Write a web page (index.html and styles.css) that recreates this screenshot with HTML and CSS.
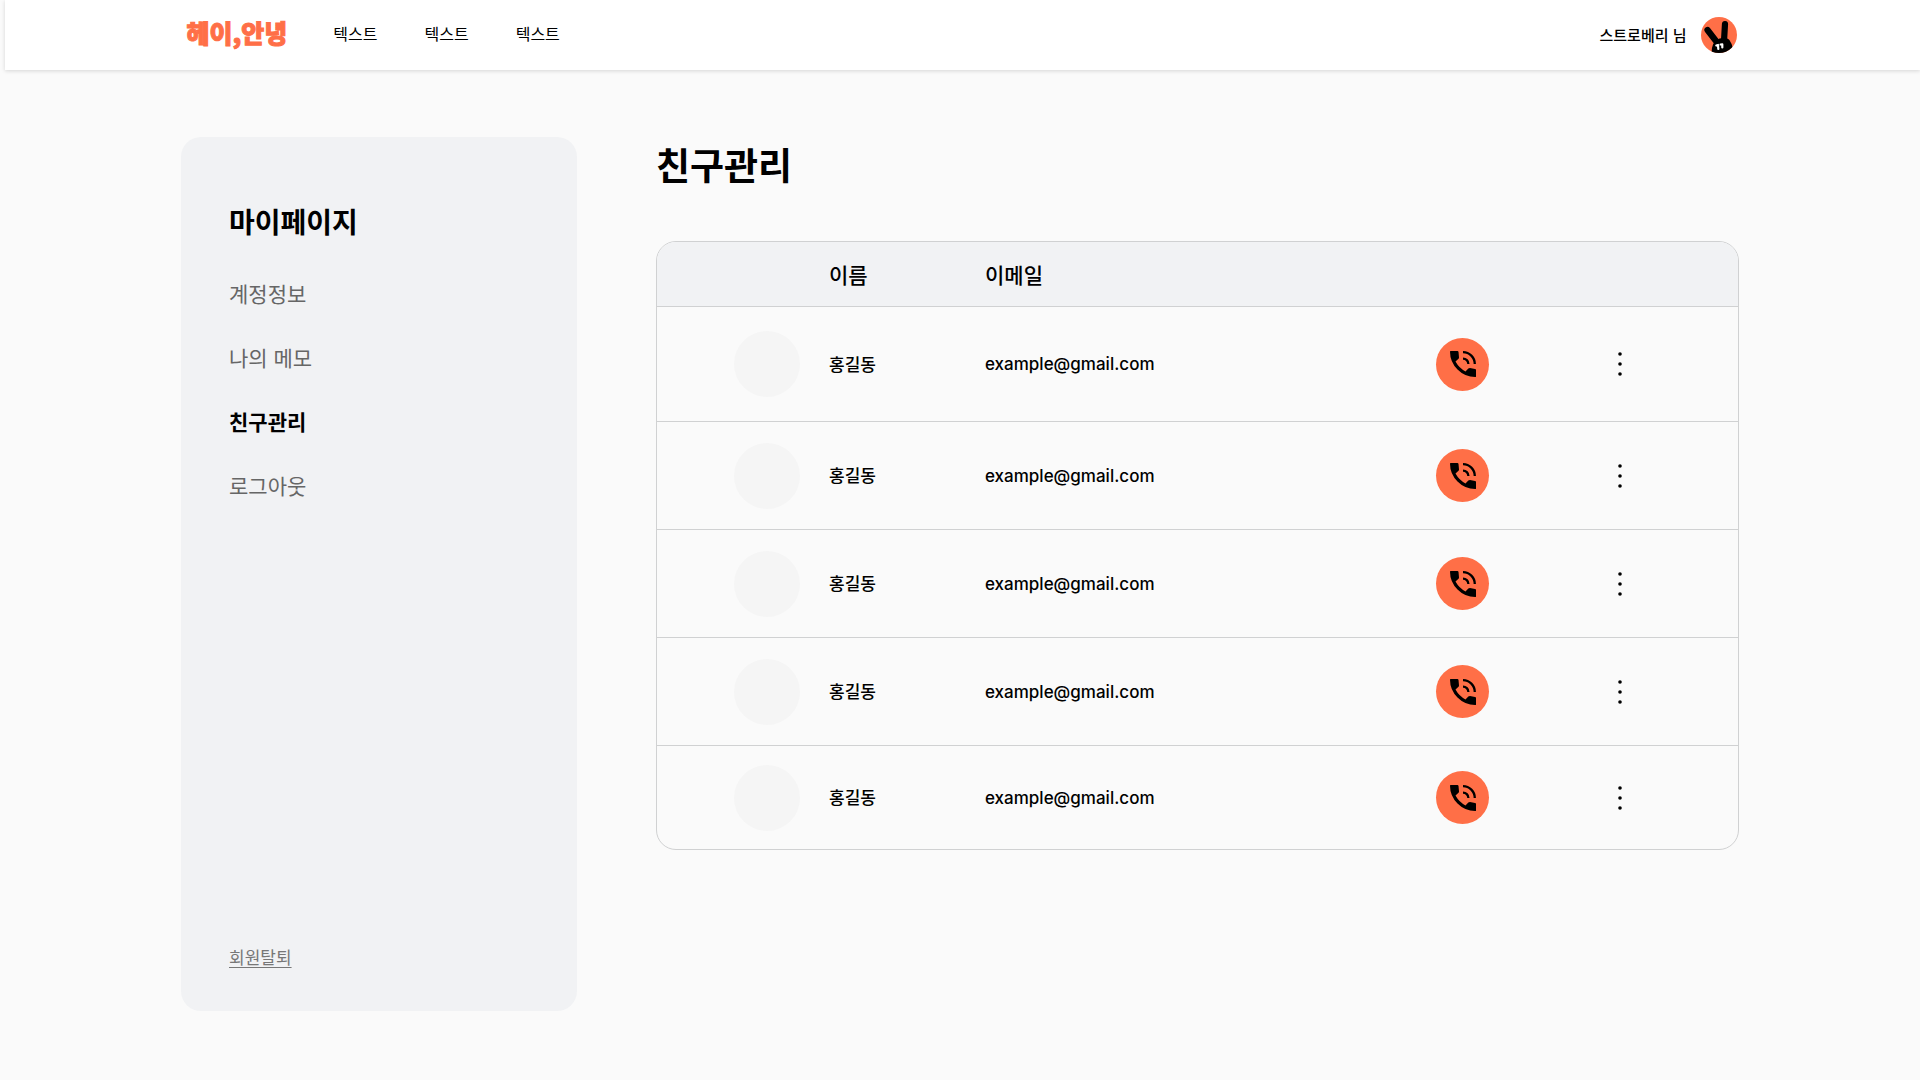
FILE: index.html
```html
<!DOCTYPE html>
<html lang="ko">
<head>
<meta charset="utf-8">
<meta name="viewport" content="width=device-width, initial-scale=1">
<title>친구관리</title>
<link rel="stylesheet" href="styles.css">
</head>
<body>
<svg class="sprite" aria-hidden="true">
  <symbol id="icon-call" viewBox="0 0 26 26">
    <path d="M.6 0H7.500Q8.300 0 8.500 1L9 6.500Q9 7.300 8.500 7.800L5.500 10.500Q9 17 15.500 20.400L18.300 17.500Q19 17 20 17L25 18Q26 18.200 26 19V25.400Q26 26 25.200 26Q15 26 7.500 18.500Q0 11 0 .8Q0 0 .6 0Z"/>
    <path d="M13 1.200A11.800 11.800 0 0 1 24.800 13M13 7.600A5.400 5.400 0 0 1 18.400 13" fill="none" stroke="#000" stroke-width="2.300"/>
  </symbol>
  <symbol id="icon-more" viewBox="0 0 4 24">
    <circle cx="2" cy="2" r="1.8"/><circle cx="2" cy="12" r="1.8"/><circle cx="2" cy="22" r="1.8"/>
  </symbol>
</svg>

<header class="topbar">
  <div class="topbar-inner">
    <a class="logo" href="#">헤이,안녕</a>
    <nav class="topnav" aria-label="주 메뉴">
      <a href="#">텍스트</a>
      <a href="#">텍스트</a>
      <a href="#">텍스트</a>
    </nav>
    <a class="user" href="#">
      <span>스트로베리 님</span>
      <svg class="user-avatar" viewBox="0 0 36 36" aria-hidden="true">
        <clipPath id="avatar-clip"><circle cx="18" cy="18" r="18"/></clipPath>
        <g clip-path="url(#avatar-clip)">
          <rect width="36" height="36" fill="#ff6f47"/>
          <path d="M6.500 13L15 24M24 7L23 24" stroke="#000" stroke-width="6.200" stroke-linecap="round"/>
          <path d="M10.500 36Q10.500 31 12 27.500Q14.500 21.500 22 21Q28 20.500 29.500 25Q31 27 31.500 30V36Z"/>
          <path d="M15.300 28.500L17 28L17.300 32M19.600 27.500L21.300 27.300L21.300 30.500" fill="none" stroke="#fff" stroke-width="2.200" stroke-linecap="round" stroke-linejoin="round"/>
        </g>
      </svg>
    </a>
  </div>
</header>

<div class="page">
  <aside class="sidebar">
    <h2>마이페이지</h2>
    <nav class="sidenav" aria-label="마이페이지">
      <a href="#">계정정보</a>
      <a href="#">나의 메모</a>
      <a href="#" aria-current="page">친구관리</a>
      <a href="#">로그아웃</a>
    </nav>
    <a class="withdraw" href="#">회원탈퇴</a>
  </aside>

  <main class="content">
    <h1>친구관리</h1>
    <table class="friends">
      <thead>
        <tr><th class="col-photo"></th><th class="col-name">이름</th><th class="col-email">이메일</th><th class="col-call"></th><th class="col-more"></th></tr>
      </thead>
      <tbody>
        <tr><td class="col-photo"><span class="photo"></span></td><td class="name">홍길동</td><td>example@gmail.com</td><td><button class="call" type="button" aria-label="전화"><svg><use href="#icon-call"/></svg></button></td><td><button class="more" type="button" aria-label="더보기"><svg><use href="#icon-more"/></svg></button></td></tr>
        <tr><td class="col-photo"><span class="photo"></span></td><td class="name">홍길동</td><td>example@gmail.com</td><td><button class="call" type="button" aria-label="전화"><svg><use href="#icon-call"/></svg></button></td><td><button class="more" type="button" aria-label="더보기"><svg><use href="#icon-more"/></svg></button></td></tr>
        <tr><td class="col-photo"><span class="photo"></span></td><td class="name">홍길동</td><td>example@gmail.com</td><td><button class="call" type="button" aria-label="전화"><svg><use href="#icon-call"/></svg></button></td><td><button class="more" type="button" aria-label="더보기"><svg><use href="#icon-more"/></svg></button></td></tr>
        <tr><td class="col-photo"><span class="photo"></span></td><td class="name">홍길동</td><td>example@gmail.com</td><td><button class="call" type="button" aria-label="전화"><svg><use href="#icon-call"/></svg></button></td><td><button class="more" type="button" aria-label="더보기"><svg><use href="#icon-more"/></svg></button></td></tr>
        <tr><td class="col-photo"><span class="photo"></span></td><td class="name">홍길동</td><td>example@gmail.com</td><td><button class="call" type="button" aria-label="전화"><svg><use href="#icon-call"/></svg></button></td><td><button class="more" type="button" aria-label="더보기"><svg><use href="#icon-more"/></svg></button></td></tr>
      </tbody>
    </table>
  </main>
</div>
</body>
</html>
```
FILE: styles.css
```css
* { box-sizing: border-box; }

body {
  margin: 0;
  background: #fafafa;
  color: #000;
  font-family: "Noto Sans CJK KR", sans-serif;
  font-size: 17px;
}

a { color: inherit; text-decoration: none; }
h1, h2 { margin: 0; font-weight: 700; }
.sprite { display: none; }

/* Top bar */
.topbar {
  margin-left: 5px;
  padding: 0 42px 0 40px;
  background: #fff;
  box-shadow: 0 1px 4px rgba(0, 0, 0, 0.15);
}

.topbar-inner {
  display: flex;
  align-items: center;
  max-width: 1550px;
  height: 70px;
  margin: 0 auto;
}

.logo {
  padding-bottom: 6px;
  color: #ff6f47;
  font-size: 25px;
  font-weight: 900;
  line-height: 36px;
  -webkit-text-stroke: 1px #ff6f47;
}

.topnav {
  display: flex;
  gap: 47px;
  margin-left: 46px;
  padding-bottom: 4px;
  font-size: 16px;
}

.user {
  display: flex;
  align-items: center;
  gap: 14px;
  margin-left: auto;
  font-size: 15px;
  font-weight: 500;
}

.user span { padding-bottom: 2px; }
.user-avatar { width: 36px; height: 36px; }

/* Page columns */
.page {
  display: grid;
  grid-template-columns: 396px minmax(0, 1fr);
  gap: 79px;
  max-width: 1638px;
  margin: 0 auto;
  padding: 67px 40px;
}

.sidebar {
  display: flex;
  flex-direction: column;
  align-items: flex-start;
  min-height: 874px;
  padding: 64px 48px 38px;
  border-radius: 20px;
  background: #f1f2f4;
}

.sidebar h2 { font-size: 28px; line-height: 40px; }

.sidenav {
  display: flex;
  flex-direction: column;
  gap: 32px;
  margin-top: 36px;
  color: #666;
  font-size: 21px;
  line-height: 32px;
}

.sidenav [aria-current] { color: #000; font-weight: 700; }

.withdraw {
  margin-top: auto;
  color: #777;
  line-height: 32px;
  text-decoration: underline;
  text-decoration-thickness: 1px;
  text-underline-offset: 3px;
}

.content h1 {
  margin-bottom: 50px;
  font-size: 37px;
  line-height: 54px;
}

/* Friends table */
.friends {
  width: 100%;
  table-layout: fixed;
  border: 1px solid #d0d1d2;
  border-radius: 20px;
  border-spacing: 0;
  overflow: hidden;
  font-weight: 500;
}

.friends th, .friends td { padding: 0; text-align: left; vertical-align: middle; }

.friends th {
  height: 64px;
  background: #f1f2f4;
  font-size: 21px;
  font-weight: 500;
}

.friends td { height: 108px; border-top: 1px solid #d0d1d2; }
.friends tbody tr:first-child td { height: 115px; }
.friends tbody tr:last-child td { height: 104px; }

.col-photo { width: 172px; }
.friends .col-photo { padding-left: 77px; }
.col-name { width: 156px; }
.col-call { width: 172px; }
.col-more { width: 130px; }
.friends .name { padding-bottom: 2px; }
.friends td:nth-child(3) { font-family: Inter, sans-serif; }

.photo {
  display: block;
  width: 66px;
  height: 66px;
  border-radius: 50%;
  background: #f5f5f5;
}

.call, .more {
  display: grid;
  place-items: center;
  padding: 0;
  border: 0;
  background: none;
  cursor: pointer;
}

.call {
  width: 53px;
  height: 53px;
  border-radius: 50%;
  background: #ff6f47;
}

.call svg { width: 26px; height: 26px; }
.more { width: 24px; height: 40px; }
.more svg { width: 4px; height: 24px; }
```
